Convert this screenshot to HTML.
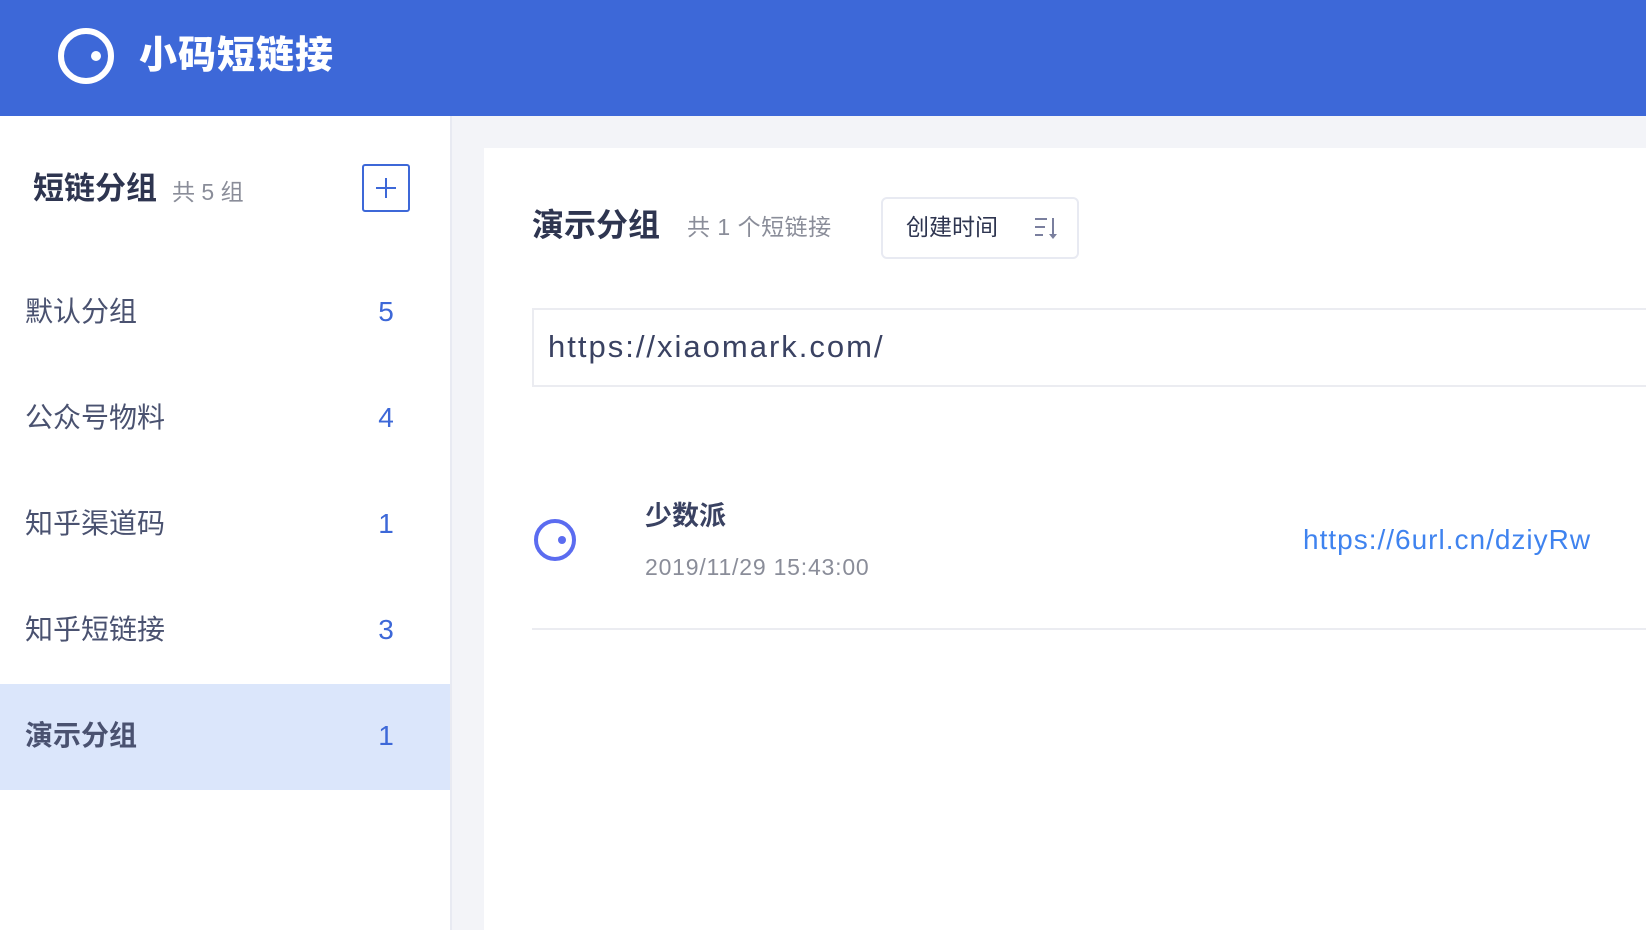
<!DOCTYPE html>
<html><head><meta charset="utf-8"><style>
*{margin:0;padding:0;box-sizing:border-box}
body{width:1646px;height:930px;overflow:hidden;background:#f3f4f8;font-family:"Liberation Sans","Noto Sans CJK SC",sans-serif;position:relative}
.a{position:absolute;white-space:nowrap}
.hdr{left:0;top:0;width:1646px;height:116px;background:#3d68d8}
.side{left:0;top:116px;width:452px;height:814px;background:#fff;border-right:2px solid #e8eaf2}
.card{left:484px;top:148px;width:1162px;height:782px;background:#fff}
.item{left:25px;font-size:28px;color:#4a5270;line-height:32px}
.num{font-size:28px;color:#3d68d8;line-height:32px;width:40px;text-align:center;left:366px}
</style></head><body>
<div class="a hdr"></div>
<svg class="a" style="left:56px;top:26px" width="60" height="60"><circle cx="30" cy="30" r="25" fill="none" stroke="#fff" stroke-width="6"/><circle cx="40" cy="30" r="5" fill="#fff"/></svg>
<div class="a" style="left:139px;top:32px;font-size:38px;font-weight:900;color:#fff;line-height:48px;letter-spacing:1px">小码短链接</div>
<div class="a side"></div>
<div class="a" style="left:33px;top:171px;font-size:31px;font-weight:bold;color:#2e3550;line-height:36px">短链分组</div>
<div class="a" style="left:172px;top:177px;font-size:23px;color:#8a8d99;line-height:30px">共 5 组</div>
<div class="a" style="left:362px;top:164px;width:48px;height:48px;border:2px solid #3d68d8;border-radius:3px"></div>
<div class="a" style="left:376px;top:187px;width:20px;height:2px;background:#3d68d8"></div>
<div class="a" style="left:385px;top:178px;width:2px;height:20px;background:#3d68d8"></div>
<div class="a" style="left:0;top:684px;width:450px;height:106px;background:#dbe6fb"></div>
<div class="a item" style="top:296px">默认分组</div><div class="a num" style="top:296px">5</div>
<div class="a item" style="top:402px">公众号物料</div><div class="a num" style="top:402px">4</div>
<div class="a item" style="top:508px">知乎渠道码</div><div class="a num" style="top:508px">1</div>
<div class="a item" style="top:614px">知乎短链接</div><div class="a num" style="top:614px">3</div>
<div class="a item" style="top:720px;font-weight:bold">演示分组</div><div class="a num" style="top:720px">1</div>
<div class="a card"></div>
<div class="a" style="left:532px;top:206px;font-size:32px;font-weight:bold;color:#2e3550;line-height:38px">演示分组</div>
<div class="a" style="left:687px;top:212px;font-size:23px;color:#8a8d99;line-height:30px;letter-spacing:0.5px">共 1 个短链接</div>
<div class="a" style="left:881px;top:197px;width:198px;height:62px;border:2px solid #e8eaf2;border-radius:6px"></div>
<div class="a" style="left:906px;top:212px;font-size:23px;color:#2e3550;line-height:30px">创建时间</div>
<svg class="a" style="left:1033px;top:216px" width="28" height="24"><g stroke="#7a7f9e" stroke-width="2"><line x1="2" y1="3" x2="14" y2="3"/><line x1="2" y1="11" x2="12" y2="11"/><line x1="2" y1="19" x2="10" y2="19"/><line x1="20" y1="2" x2="20" y2="19"/></g><path d="M16 18 L20 23 L24 18Z" fill="#7a7f9e"/></svg>
<div class="a" style="left:532px;top:308px;width:1114px;height:79px;border:2px solid #ebecf1;border-right:none"></div>
<div class="a" style="left:548px;top:328px;font-size:31px;color:#3a4262;line-height:38px;letter-spacing:2px">https://xiaomark.com/</div>
<svg class="a" style="left:533px;top:518px" width="44" height="44"><circle cx="22" cy="22" r="19" fill="none" stroke="#5b6cf0" stroke-width="4"/><circle cx="29" cy="22" r="4" fill="#5b6cf0"/></svg>
<div class="a" style="left:645px;top:500px;font-size:27px;font-weight:bold;color:#3a4262;line-height:32px">少数派</div>
<div class="a" style="left:645px;top:553px;font-size:23px;color:#8a8d99;line-height:28px;letter-spacing:0.8px">2019/11/29 15:43:00</div>
<div class="a" style="left:1303px;top:523px;font-size:28px;color:#3f83ef;line-height:34px;letter-spacing:1px">https://6url.cn/dziyRw</div>
<div class="a" style="left:532px;top:628px;width:1114px;height:2px;background:#ebecf1"></div>
</body></html>
